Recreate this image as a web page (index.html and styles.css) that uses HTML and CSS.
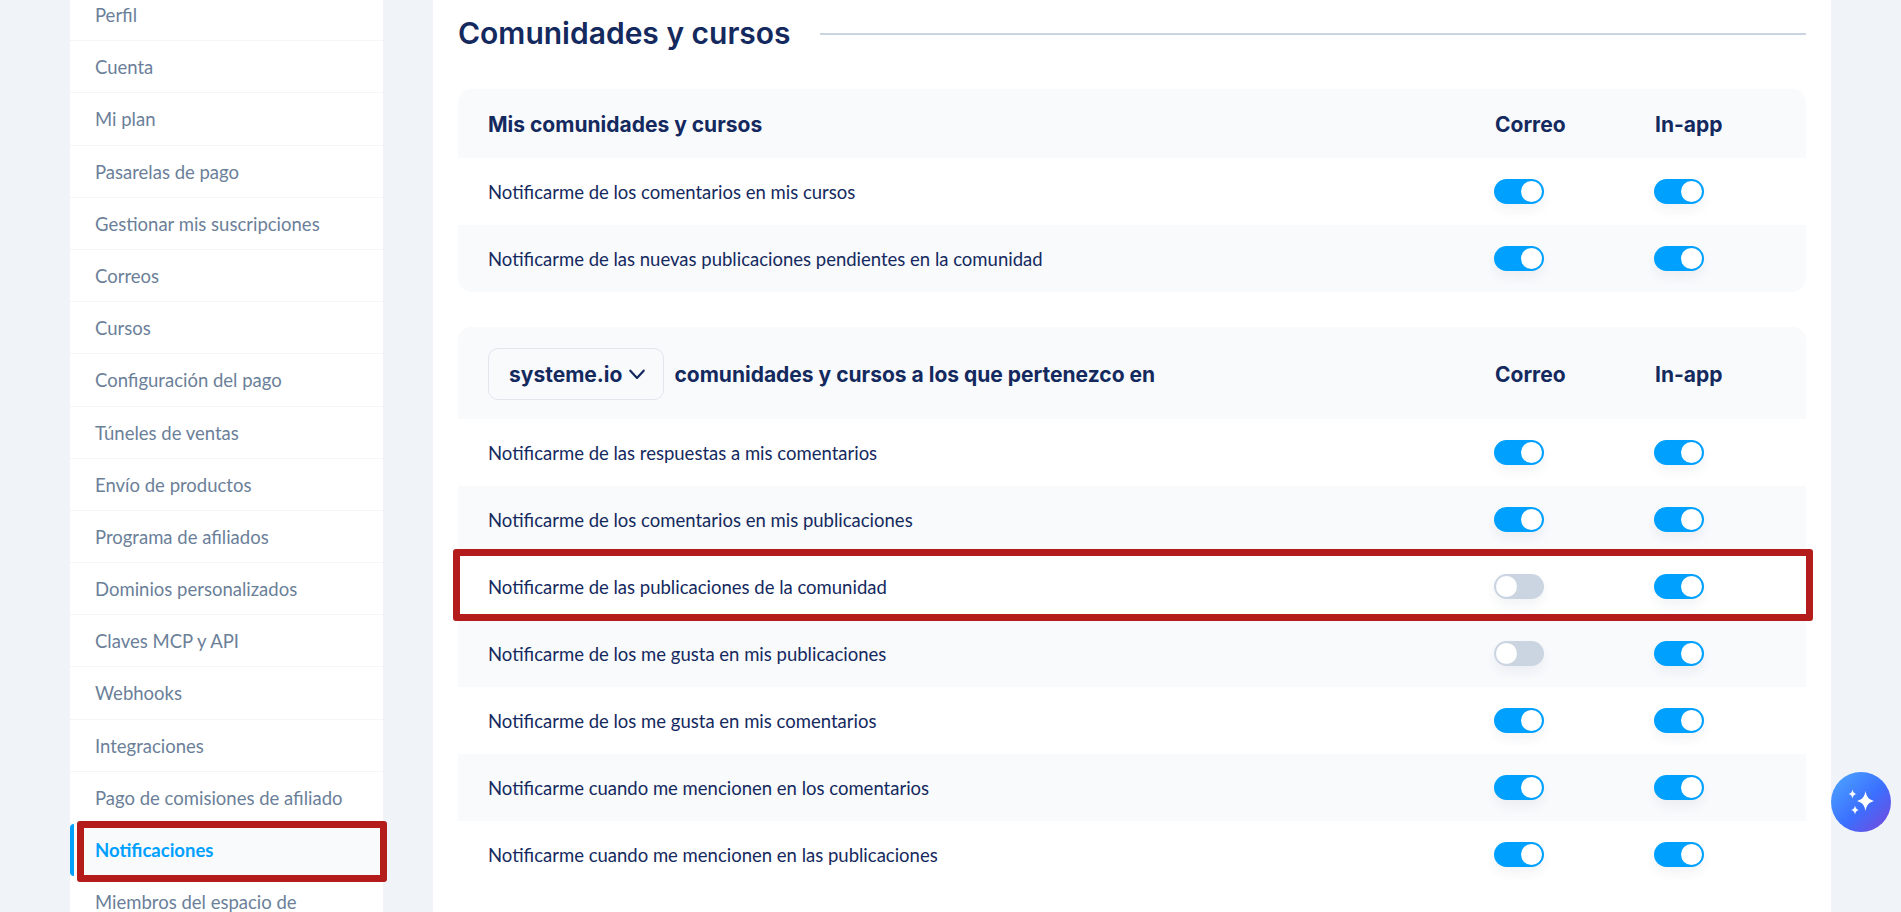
FILE: index.html
```html
<!DOCTYPE html>
<html lang="es">
<head>
  <meta charset="UTF-8" />
  <meta name="viewport" content="width=device-width, initial-scale=1.0" />
  <title>Notificaciones</title>
  <link rel="stylesheet" href="styles.css">
</head>
<body>
  <div class="layout">
    <nav class="sidebar">
      <a class="nav-item">Perfil</a>
      <a class="nav-item">Cuenta</a>
      <a class="nav-item">Mi plan</a>
      <a class="nav-item">Pasarelas de pago</a>
      <a class="nav-item">Gestionar mis suscripciones</a>
      <a class="nav-item">Correos</a>
      <a class="nav-item">Cursos</a>
      <a class="nav-item">Configuración del pago</a>
      <a class="nav-item">Túneles de ventas</a>
      <a class="nav-item">Envío de productos</a>
      <a class="nav-item">Programa de afiliados</a>
      <a class="nav-item">Dominios personalizados</a>
      <a class="nav-item">Claves MCP y API</a>
      <a class="nav-item">Webhooks</a>
      <a class="nav-item">Integraciones</a>
      <a class="nav-item">Pago de comisiones de afiliado</a>
      <a class="nav-item active">Notificaciones</a>
      <a class="nav-item">Miembros del espacio de trabajo</a>
    </nav>

    <main class="panel">
      <div class="section-title">
        <h2>Comunidades y cursos</h2>
        <span class="title-line"></span>
      </div>

      <section class="card">
        <div class="card-head">
          <div class="head-label">Mis comunidades y cursos</div>
          <div class="col-title">Correo</div>
          <div class="col-title">In-app</div>
        </div>
        <div class="row">
          <div class="row-label">Notificarme de los comentarios en mis cursos</div>
          <div class="col"><span class="toggle on"></span></div>
          <div class="col"><span class="toggle on"></span></div>
        </div>
        <div class="row">
          <div class="row-label">Notificarme de las nuevas publicaciones pendientes en la comunidad</div>
          <div class="col"><span class="toggle on"></span></div>
          <div class="col"><span class="toggle on"></span></div>
        </div>
      </section>

      <section class="card">
        <div class="card-head tall">
          <div class="head-label with-select">
            <button class="select">systeme.io
              <svg width="20" height="20" viewBox="0 0 18 18" fill="none" stroke="#14295e" stroke-width="2" stroke-linecap="round" stroke-linejoin="round"><path d="M3 6l6 6.500L15 6"/></svg>
            </button>
            comunidades y cursos a los que pertenezco en
          </div>
          <div class="col-title">Correo</div>
          <div class="col-title">In-app</div>
        </div>
        <div class="row">
          <div class="row-label">Notificarme de las respuestas a mis comentarios</div>
          <div class="col"><span class="toggle on"></span></div>
          <div class="col"><span class="toggle on"></span></div>
        </div>
        <div class="row">
          <div class="row-label">Notificarme de los comentarios en mis publicaciones</div>
          <div class="col"><span class="toggle on"></span></div>
          <div class="col"><span class="toggle on"></span></div>
        </div>
        <div class="row">
          <div class="row-label">Notificarme de las publicaciones de la comunidad</div>
          <div class="col"><span class="toggle"></span></div>
          <div class="col"><span class="toggle on"></span></div>
        </div>
        <div class="row">
          <div class="row-label">Notificarme de los me gusta en mis publicaciones</div>
          <div class="col"><span class="toggle"></span></div>
          <div class="col"><span class="toggle on"></span></div>
        </div>
        <div class="row">
          <div class="row-label">Notificarme de los me gusta en mis comentarios</div>
          <div class="col"><span class="toggle on"></span></div>
          <div class="col"><span class="toggle on"></span></div>
        </div>
        <div class="row">
          <div class="row-label">Notificarme cuando me mencionen en los comentarios</div>
          <div class="col"><span class="toggle on"></span></div>
          <div class="col"><span class="toggle on"></span></div>
        </div>
        <div class="row">
          <div class="row-label">Notificarme cuando me mencionen en las publicaciones</div>
          <div class="col"><span class="toggle on"></span></div>
          <div class="col"><span class="toggle on"></span></div>
        </div>
      </section>
    </main>
  </div>

  <div class="mark mark-nav"></div>
  <div class="mark mark-row"></div>

  <button class="ai-btn">
    <svg width="60" height="60" viewBox="0 0 60 60" fill="#fff"><path d="M34.500 19c1 5.500 3 8.500 8.500 10-5.500 1.500-7.500 4.500-8.500 10-1-5.500-3-8.500-8.500-10 5.500-1.500 7.500-4.500 8.500-10z"/><path d="M21.500 17.500c.5 2.800 1.500 3.900 4 4.500-2.500.6-3.500 1.700-4 4.500-.5-2.800-1.500-3.900-4-4.500 2.500-.6 3.500-1.700 4-4.500z"/><path d="M24 33.500c.5 2.800 1.500 3.900 4 4.500-2.500.6-3.500 1.700-4 4.500-.5-2.800-1.500-3.900-4-4.500 2.500-.6 3.500-1.700 4-4.500z"/></svg>
  </button>
</body>
</html>
```

FILE: styles.css
```css
html, body {
  height: 100%;
}
body {
  margin: 0;
  background: #f0f4f9;
  font-family: Lato, 'Noto Sans', sans-serif;
  color: #14295e;
  overflow: hidden;
  position: relative;
}
.layout {
  display: flex;
  align-items: flex-start;
  padding-left: 70px;
  gap: 50px;
  height: 912px;
  overflow: hidden;
}
.sidebar {
  width: 313px;
  flex-shrink: 0;
  background: #fff;
  margin-top: -11px;
}
.nav-item {
  display: block;
  height: 52.200px;
  box-sizing: border-box;
  line-height: 53px;
  padding: 0 30px 0 25px;
  font-size: 18.500px;
  color: #6b7f99;
  border-bottom: 1px solid #f3f5f8;
}
.nav-item.active {
  color: #00a0ff;
  font-weight: 700;
  background: #f8fafc;
  border-bottom: none;
  border-left: 4px solid #00a0ff;
  padding-left: 21px;
  border-radius: 4px 0 0 4px;
}
.panel {
  width: 1398px;
  flex-shrink: 0;
  box-sizing: border-box;
  background: #fff;
  height: 912px;
  padding: 0 25px;
}
.section-title {
  display: flex;
  align-items: center;
  gap: 29px;
  height: 68px;
  margin-bottom: 21px;
}
.section-title h2 {
  margin: 0 0 2px;
  font-family: Inter, sans-serif;
  font-size: 30px;
  font-weight: 600;
  color: #14295e;
}
.title-line {
  flex: 1;
  height: 2px;
  background: #cbd5e1;
}
.card {
  margin-bottom: 35px;
}
.card-head, .row {
  display: flex;
  align-items: center;
  height: 67px;
}
.card-head {
  box-sizing: border-box;
  height: 69px;
  background: #f8fafc;
  border-radius: 14px 14px 0 0;
  font-family: Inter, sans-serif;
  font-weight: 700;
  font-size: 21px;
  padding: 2px 0 0 30px;
}
.card-head.tall {
  height: 92px;
}
.head-label {
  flex: 1;
}
.with-select {
  display: flex;
  align-items: center;
  gap: 10px;
}
.select {
  display: flex;
  align-items: center;
  gap: 5px;
  height: 52px;
  padding: 0 16px 0 20px;
  font: inherit;
  color: inherit;
  background: #f8fafc;
  border: 1px solid #e2e6ec;
  border-radius: 10px;
}
.col-title, .col {
  width: 160px;
  flex-shrink: 0;
}
.col-title {
  padding-left: 1px;
  box-sizing: border-box;
}
.col-title:last-child, .col:last-child {
  width: 152px;
}
.row {
  padding-left: 30px;
  font-size: 18.500px;
}
.row-label {
  flex: 1;
}
.card .row:nth-child(odd) {
  background: #f8fafc;
}
.card .row:last-child {
  border-radius: 0 0 14px 14px;
}
.card:last-child .row:last-child {
  background: transparent;
}
.toggle {
  display: block;
  position: relative;
  width: 50px;
  height: 25px;
  border-radius: 13px;
  background: #cbd5e1;
  box-shadow: 0 6px 12px rgba(30, 50, 90, 0.06);
}
.toggle::after {
  content: "";
  position: absolute;
  top: 2px;
  left: 2px;
  width: 21px;
  height: 21px;
  border-radius: 50%;
  background: #fff;
}
.toggle.on {
  background: #00a0ff;
}
.toggle.on::after {
  left: 27px;
}
.mark {
  position: absolute;
  box-sizing: border-box;
  border: 7px solid #b41c1c;
  border-radius: 3px;
}
.mark-nav {
  left: 77px;
  top: 821px;
  width: 310px;
  height: 61px;
}
.mark-row {
  left: 453px;
  top: 549px;
  width: 1360px;
  height: 72px;
}
.ai-btn {
  position: absolute;
  left: 1831px;
  top: 772px;
  width: 60px;
  height: 60px;
  padding: 0;
  border: none;
  border-radius: 50%;
  display: flex;
  align-items: center;
  justify-content: center;
  background: linear-gradient(135deg, #4ea8ff 0%, #3b6fff 55%, #7a45d8 100%);
}
```
